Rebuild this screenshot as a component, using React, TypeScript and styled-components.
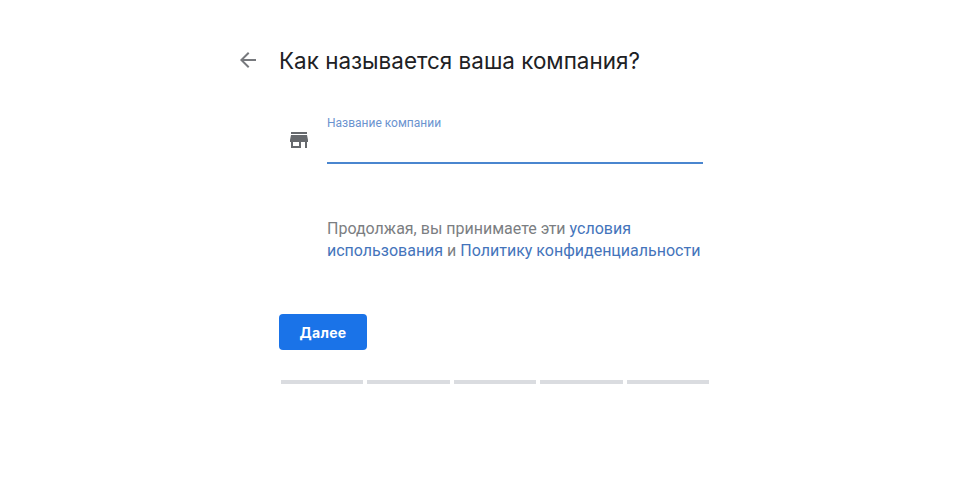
import React from "react"
import styled, { createGlobalStyle } from "styled-components"

const GlobalStyle = createGlobalStyle`
    html, body {
        margin:0;
        padding:0;
        background:#fff;
    }
    body {
        font-family:Roboto, "Liberation Sans", sans-serif;
    }
`

const Page = styled.div`
    width:974px;
    height:497px;
    padding:42px 0 0 236px;
    box-sizing:border-box;
    overflow:hidden;
`

const Header = styled.header`
    display:flex;
    align-items:center;
    gap:19px;
    height:36px;
`

const BackIcon = styled.svg`
    width:24px;
    height:24px;
    fill:#77797d;
    flex:none;
`

const Title = styled.h1`
    margin:0;
    font-family:Inter, sans-serif;
    font-size:22.45px;
    font-weight:400;
    color:#202124;
    white-space:nowrap;
`

const Body = styled.main`
    margin-left:43px;
    width:430px;
`

const FieldRow = styled.div`
    display:flex;
    align-items:flex-end;
    gap:16px;
    margin:39px 0 0 8px;
`

const StoreIcon = styled.svg`
    width:24px;
    height:24px;
    fill:#66696d;
    flex:none;
    margin-bottom:12px;
`

const Field = styled.label`
    display:block;
    width:376px;
    height:45px;
    border-bottom:2px solid #4a86cf;
    font-size:12px;
    line-height:12px;
    color:#6b93cf;
`

const Terms = styled.p`
    margin:54px 0 0 48px;
    width:385px;
    font-size:16px;
    line-height:22px;
    color:#7b7e82;
`

const TermsLink = styled.a`
    color:#4474bb;
    text-decoration:none;
`

const NextButton = styled.button`
    display:block;
    width:88px;
    height:36px;
    margin-top:52px;
    border:0;
    border-radius:4px;
    background:#1a73e8;
    color:#fff;
    font-family:Inter, sans-serif;
    font-size:14px;
    font-weight:700;
    letter-spacing:0.3px;
`

const Progress = styled.div`
    display:grid;
    grid-template-columns:repeat(5, 1fr);
    gap:4px;
    width:428px;
    margin:30px 0 0 2px;
`

const Step = styled.span`
    display:block;
    height:4px;
    background:#dadce0;
`

const App = () => {
    return (
        <Page>
            <GlobalStyle />
            <Header>
                <BackIcon viewBox="0 0 24 24">
                    <path d="M20 11H7.83l5.59-5.59L12 4l-8 8 8 8 1.41-1.41L7.83 13H20v-2z" />
                </BackIcon>
                <Title>Как называется ваша компания?</Title>
            </Header>
            <Body>
                <FieldRow>
                    <StoreIcon viewBox="0 0 24 24">
                        <path d="M20 4H4v2h16V4zm1 10v-2l-1-5H4l-1 5v2h1v6h10v-6h4v6h2v-6h1zm-9 4H6v-4h6v4z" />
                    </StoreIcon>
                    <Field>Название компании</Field>
                </FieldRow>
                <Terms>
                    Продолжая, вы принимаете эти <TermsLink href="#">условия использования</TermsLink> и{" "}
                    <TermsLink href="#">Политику конфиденциальности</TermsLink>
                </Terms>
                <NextButton>Далее</NextButton>
                <Progress>
                    <Step />
                    <Step />
                    <Step />
                    <Step />
                    <Step />
                </Progress>
            </Body>
        </Page>
    )
}

export default App
